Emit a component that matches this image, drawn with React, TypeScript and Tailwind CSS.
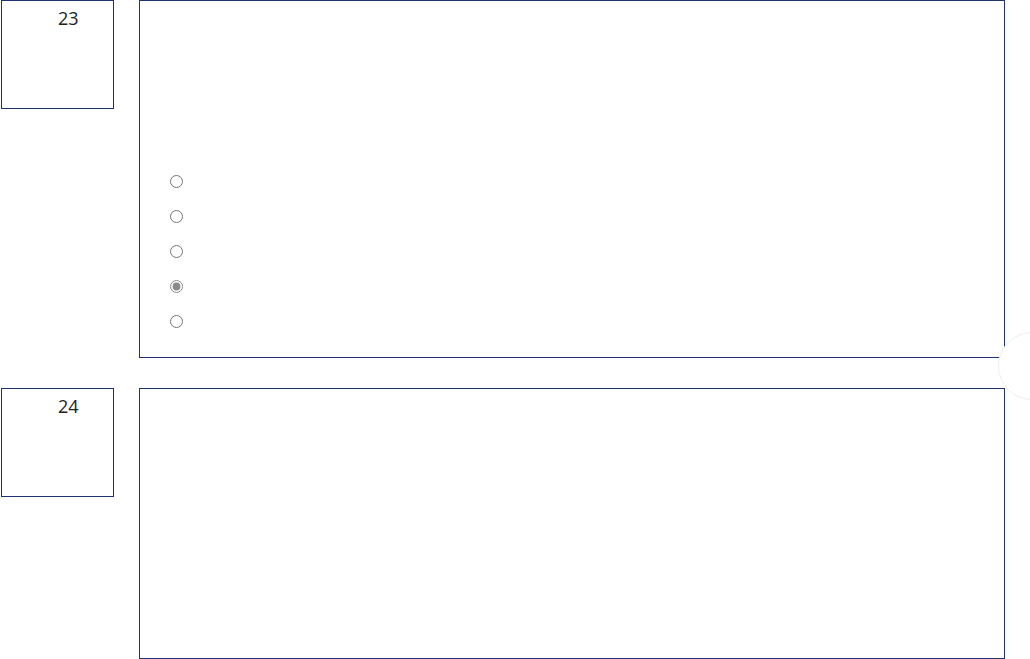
import React from 'react';

const navy = 'border-[#1f3276]';

function Question({ num, height, options }: { num: number; height: string; options?: number }) {
  return (
    <div className="flex items-start">
      <div className={`ml-px w-[113px] h-[109px] border ${navy} bg-white`}>
        <div className="pl-[56px] pt-[4px] text-[18px] leading-[26px] text-[#222]">{num}</div>
      </div>
      <div className={`ml-[25px] w-[866px] ${height} border ${navy} bg-white`}>
        {options ? (
          <div className="flex flex-col gap-[22px] pl-[30px] pt-[174px]">
            {Array.from({ length: options }).map((_, i) => (
              <input
                key={i}
                type="radio"
                name={`q${num}`}
                readOnly
                checked={i === 3}
                className="m-0 h-[13px] w-[13px] accent-[#8a8a8a]"
              />
            ))}
          </div>
        ) : null}
      </div>
    </div>
  );
}

export default function App() {
  return (
    <div className="relative h-[659px] w-[1030px] overflow-hidden bg-white font-['Open_Sans',sans-serif]">
      <div className="flex flex-col gap-[30px]">
        <Question num={23} height="h-[358px]" options={5} />
        <Question num={24} height="h-[271px]" />
      </div>
      <div className="absolute left-[998px] top-[332px] h-[68px] w-[68px] rounded-full border border-[#eeeeee] bg-white" />
    </div>
  );
}
